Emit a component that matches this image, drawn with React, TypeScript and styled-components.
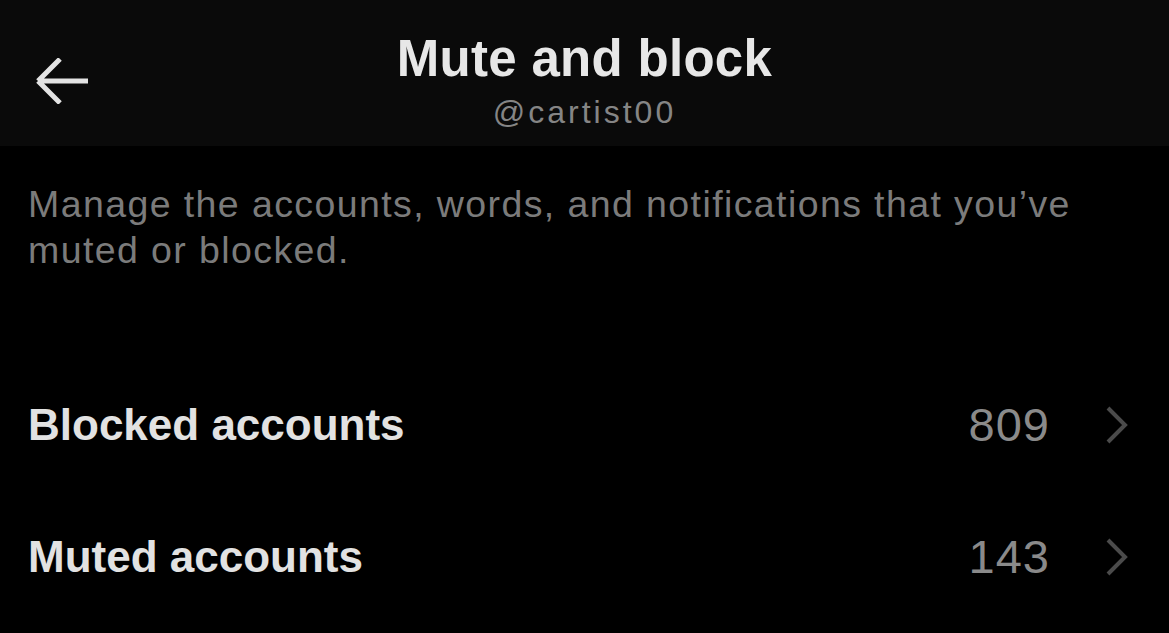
import React from 'react';
import styled, { createGlobalStyle } from 'styled-components';

const GlobalStyle = createGlobalStyle`
  html, body {
    margin: 0;
    padding: 0;
    background: #000;
  }
  body {
    font-family: "Liberation Sans", Arial, sans-serif;
    -webkit-font-smoothing: antialiased;
  }
`;

const Page = styled.div`
  width: 1169px;
  height: 633px;
  background: #000;
  overflow: hidden;
`;

const Header = styled.header`
  height: 146px;
  background: #0a0a0a;
  display: grid;
  grid-template-columns: 1fr auto 1fr;
  box-sizing: border-box;
`;

const BackButton = styled.button`
  justify-self: start;
  align-self: start;
  margin: 58px 0 0 35px;
  padding: 0;
  border: none;
  background: none;
  cursor: pointer;
  display: flex;
`;

const TitleBlock = styled.div`
  padding-top: 31px;
  display: flex;
  flex-direction: column;
  align-items: center;
`;

const Title = styled.h1`
  margin: 0;
  font-size: 51px;
  line-height: 56px;
  font-weight: 700;
  letter-spacing: 0.3px;
  color: #e7e7e7;
`;

const Handle = styled.div`
  margin-top: 7px;
  font-size: 32px;
  line-height: 36px;
  letter-spacing: 3px;
  color: #858585;
`;

const Description = styled.p`
  margin: 0;
  padding: 35px 80px 0 28px;
  font-size: 37.5px;
  line-height: 46px;
  letter-spacing: 1.4px;
  color: #7b7b7b;
`;

const List = styled.div`
  margin-top: 86px;
  display: flex;
  flex-direction: column;
`;

const Row = styled.div`
  height: 132px;
  display: flex;
  align-items: center;
  padding: 0 40px 0 28px;
  cursor: pointer;
`;

const Label = styled.span`
  flex: 1;
  font-size: 44px;
  line-height: 52px;
  font-weight: 700;
  color: #e2e2e2;
`;

const Count = styled.span`
  font-size: 47px;
  line-height: 52px;
  letter-spacing: 1px;
  color: #8a8a8a;
  margin-right: 55px;
`;

const BackArrow = () => (
  <svg width="54" height="46" viewBox="0 0 54 46" fill="none">
    <path d="M3 23H53M3 23L25 1M3 23L25 45" stroke="#e3e3e3" strokeWidth="5" />
  </svg>
);

const Chevron = () => (
  <svg width="24" height="38" viewBox="0 0 24 38" fill="none">
    <path d="M3 2L20 19L3 36" stroke="#4b4b4b" strokeWidth="4" />
  </svg>
);

const items = [
  { label: 'Blocked accounts', count: 809 },
  { label: 'Muted accounts', count: 143 },
];

const App = () => (
  <Page>
    <GlobalStyle />
    <Header>
      <BackButton aria-label="Back">
        <BackArrow />
      </BackButton>
      <TitleBlock>
        <Title>Mute and block</Title>
        <Handle>@cartist00</Handle>
      </TitleBlock>
    </Header>
    <Description>
      Manage the accounts, words, and notifications that you’ve muted or blocked.
    </Description>
    <List>
      {items.map(item => (
        <Row key={item.label}>
          <Label>{item.label}</Label>
          <Count>{item.count}</Count>
          <Chevron />
        </Row>
      ))}
    </List>
  </Page>
);

export default App;
